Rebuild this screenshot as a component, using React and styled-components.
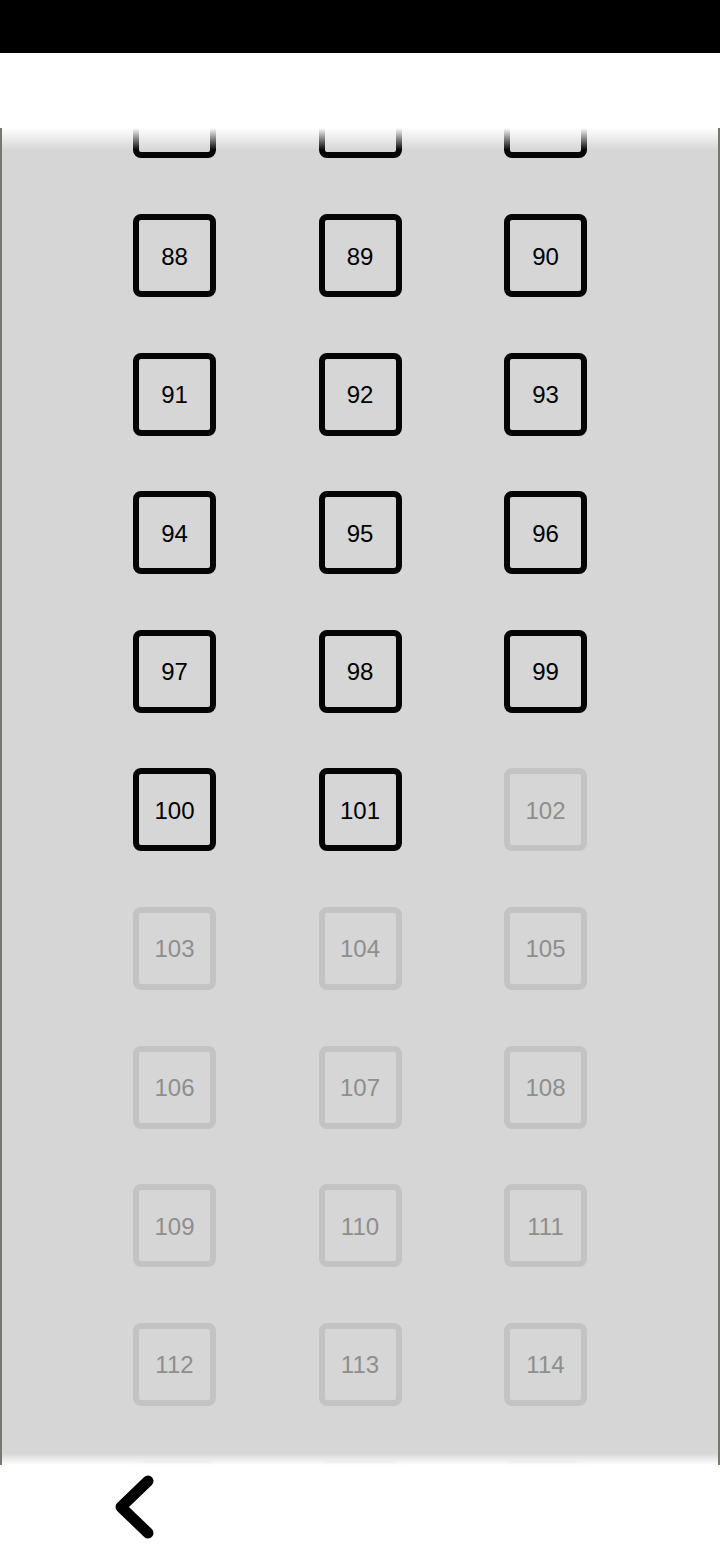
import React from 'react';
import styled, { createGlobalStyle } from 'styled-components';

const GlobalStyle = createGlobalStyle`
  html, body {
    margin: 0;
    padding: 0;
    background: #ffffff;
  }
  body {
    font-family: 'Liberation Sans', Arial, sans-serif;
  }
`;

const Screen = styled.div`
  width: 720px;
  height: 1560px;
  display: flex;
  flex-direction: column;
  overflow: hidden;
`;

const StatusBar = styled.div`
  height: 53px;
  flex: none;
  background: #000000;
`;

const Header = styled.div`
  height: 75px;
  flex: none;
  background: #ffffff;
`;

const ListArea = styled.div`
  flex: 1;
  position: relative;
  overflow: hidden;
  background: #d6d6d6;
  border-left: 2px solid #7b7670;
  border-right: 2px solid #7b7670;

  &::before,
  &::after {
    content: '';
    position: absolute;
    left: 0;
    right: 0;
    z-index: 1;
    pointer-events: none;
  }
  &::before {
    top: 0;
    height: 22px;
    background: linear-gradient(#ffffff 0%, rgba(214, 214, 214, 0) 100%);
  }
  &::after {
    bottom: 0;
    height: 12px;
    background: linear-gradient(rgba(255, 255, 255, 0) 0%, #ffffff 100%);
  }
`;

const Grid = styled.div`
  display: grid;
  grid-template-columns: repeat(3, 83px);
  justify-content: center;
  column-gap: 102.5px;
  row-gap: 55.6px;
  margin-top: -52.6px;
`;

const Level = styled.div`
  box-sizing: border-box;
  width: 83px;
  height: 83px;
  padding-top: 2px;
  border: 6px solid ${(p) => (p.locked ? '#c3c3c3' : '#050505')};
  border-radius: 8px;
  display: flex;
  align-items: center;
  justify-content: center;
  font-size: 24px;
  font-weight: 400;
  color: ${(p) => (p.locked ? '#8e8e8e' : '#000000')};
`;

const Footer = styled.div`
  height: 95px;
  flex: none;
  background: #ffffff;
  display: flex;
  align-items: flex-start;
  padding: 6px 0 0 108px;
  box-sizing: border-box;
`;

const BackButton = styled.button`
  border: none;
  background: none;
  padding: 0;
  width: 50px;
  height: 70px;
  cursor: pointer;
`;

const levels = [];
for (let n = 85; n <= 117; n++) levels.push(n);

const App = () => {
  return (
    <Screen>
      <GlobalStyle />
      <StatusBar />
      <Header />
      <ListArea>
        <Grid>
          {levels.map((n) => (
            <Level key={n} locked={n > 101}>
              {n}
            </Level>
          ))}
        </Grid>
      </ListArea>
      <Footer>
        <BackButton aria-label="back">
          <svg width="50" height="70" viewBox="0 0 50 70">
            <polyline
              points="40,10 13,36 40,62"
              fill="none"
              stroke="#000"
              strokeWidth="11"
              strokeLinecap="round"
              strokeLinejoin="round"
            />
          </svg>
        </BackButton>
      </Footer>
    </Screen>
  );
};

export default App;
